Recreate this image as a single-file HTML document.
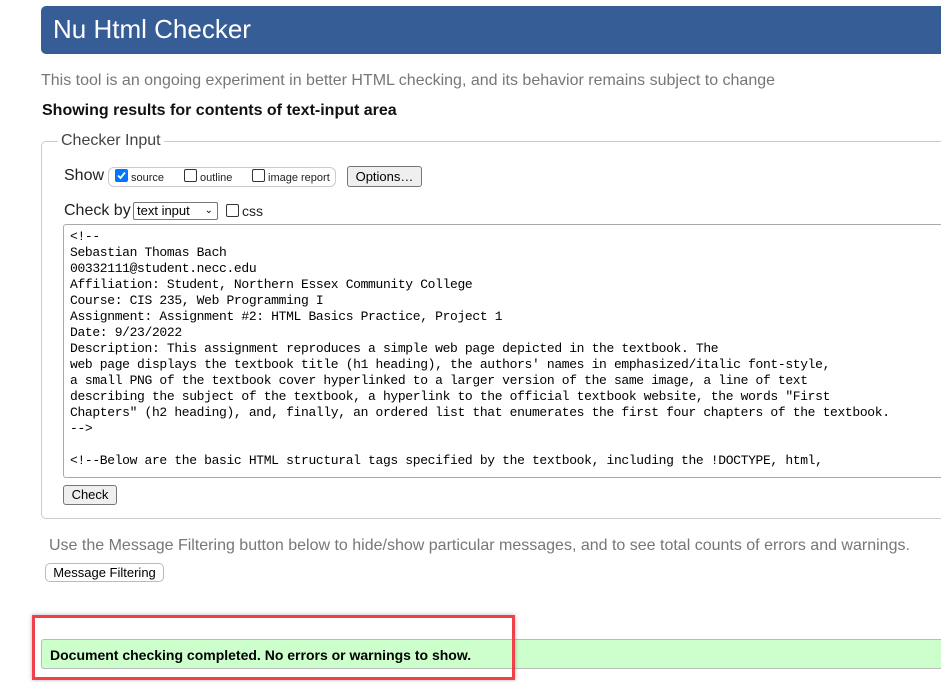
<!DOCTYPE html>
<html><head><style>
body{margin:0;width:941px;height:682px;overflow:hidden;background:#fff;font-family:"Liberation Sans",Arial,sans-serif;position:relative}
.a{position:absolute;white-space:nowrap}
.hdr{left:41px;top:6px;width:920px;height:48px;background:#365d95;border-radius:5px 0 0 5px}
.btn{position:absolute;background:#efefef;border:1px solid #767676;border-radius:3px;font-size:13px;color:#000;text-align:center;box-sizing:border-box}
.cb{display:inline-block;width:11px;height:11px;border:1px solid #333;border-radius:2px;vertical-align:-1px;margin-right:3px;background:#fff}
pre{margin:0;font-family:"Liberation Mono","DejaVu Sans Mono",monospace;font-size:13px;line-height:16px;color:#000;letter-spacing:-0.35px}
</style></head><body>
<div class="a hdr"></div>
<div class="a" style="left:53px;top:14px;font-size:26px;color:#fff">Nu Html Checker</div>
<div class="a" style="left:41px;top:72px;font-size:16px;color:#777">This tool is an ongoing experiment in better HTML checking, and its behavior remains subject to change</div>
<div class="a" style="left:42px;top:102px;font-size:16px;font-weight:bold;color:#111">Showing results for contents of text-input area</div>
<div class="a" style="left:41px;top:141px;width:940px;height:378px;border:1px solid #ccc;border-radius:5px;box-sizing:border-box"></div>
<div class="a" style="left:58px;top:132px;background:#fff;padding:0 3px;font-size:16px;color:#444">Checker Input</div>
<div class="a" style="left:64px;top:167px;font-size:16px;color:#222">Show</div>
<div class="a" style="left:108px;top:167px;width:228px;height:20px;border:1px solid #ccc;border-radius:6px;box-sizing:border-box"></div>
<div class="a" style="left:115px;top:169px;font-size:11px;color:#222"><span class="cb" style="background:#0075ff;border-color:#0075ff;position:relative"><svg width="11" height="11" style="position:absolute;left:0;top:0"><path d="M2 5.5 L4.5 8 L9 2.5" stroke="#fff" stroke-width="1.8" fill="none"/></svg></span>source</div>
<div class="a" style="left:184px;top:169px;font-size:11px;color:#222"><span class="cb"></span>outline</div>
<div class="a" style="left:252px;top:169px;font-size:11px;color:#222"><span class="cb"></span>image report</div>
<div class="btn" style="left:347px;top:166px;width:75px;height:21px;line-height:19px;font-size:13px">Options…</div>
<div class="a" style="left:64px;top:202px;font-size:16px;color:#222">Check by</div>
<div class="a" style="left:133px;top:202px;width:85px;height:18px;border:1px solid #767676;border-radius:2px;box-sizing:border-box;font-size:13px;line-height:16px;padding-left:3px">text input <span style="position:absolute;right:4px;top:0;font-size:10px">&#x2304;</span></div>
<div class="a" style="left:226px;top:203px;font-size:14px;color:#222"><span class="cb" style="width:11px;height:11px"></span>css</div>
<div class="a" style="left:63px;top:224px;width:890px;height:254px;border:1px solid #aaa;border-radius:3px;box-sizing:border-box;overflow:hidden;padding:4px 0 0 6px"><pre>&lt;!--
Sebastian Thomas Bach
00332111@student.necc.edu
Affiliation: Student, Northern Essex Community College
Course: CIS 235, Web Programming I
Assignment: Assignment #2: HTML Basics Practice, Project 1
Date: 9/23/2022
Description: This assignment reproduces a simple web page depicted in the textbook. The
web page displays the textbook title (h1 heading), the authors' names in emphasized/italic font-style,
a small PNG of the textbook cover hyperlinked to a larger version of the same image, a line of text
describing the subject of the textbook, a hyperlink to the official textbook website, the words "First
Chapters" (h2 heading), and, finally, an ordered list that enumerates the first four chapters of the textbook.
--&gt;

&lt;!--Below are the basic HTML structural tags specified by the textbook, including the !DOCTYPE, html,</pre></div>
<div class="btn" style="left:63px;top:485px;width:54px;height:20px;line-height:18px">Check</div>
<div class="a" style="left:49px;top:537px;font-size:16px;color:#777">Use the Message Filtering button below to hide/show particular messages, and to see total counts of errors and warnings.</div>
<div class="btn" style="left:45px;top:563px;width:119px;height:19px;line-height:17px;background:#fff;border-color:#bbb;border-radius:5px">Message Filtering</div>
<div class="a" style="left:41px;top:639px;width:910px;height:30px;background:#ccffcc;border:1px solid #bbb;border-radius:3px;box-sizing:border-box"></div>
<div class="a" style="left:50px;top:647px;font-size:14px;font-weight:bold;color:#000">Document checking completed. No errors or warnings to show.</div>
<div class="a" style="left:32px;top:615px;width:483px;height:65px;border:3px solid #f0414a;box-sizing:border-box;box-shadow:0 0 4px rgba(0,0,0,.3)"></div>
</body></html>
